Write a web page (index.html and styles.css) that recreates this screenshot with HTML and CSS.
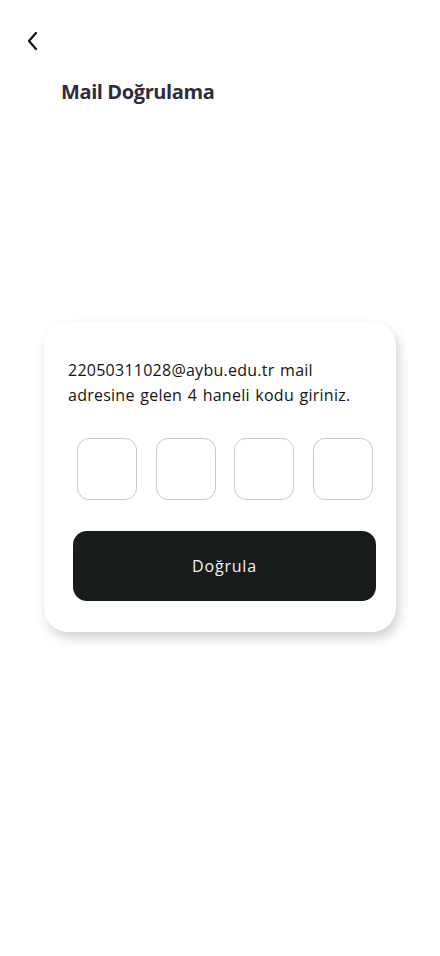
FILE: index.html
```html
<!DOCTYPE html>
<html lang="tr">
<head>
<meta charset="utf-8">
<title>Mail Doğrulama</title>
<link rel="stylesheet" href="styles.css">
</head>
<body>
<div class="screen">
  <header class="header">
    <button class="back" aria-label="Geri">
      <svg width="14" height="20" viewBox="0 0 14 20"><path d="M10 2 L3 10 L10 18" fill="none" stroke="#111" stroke-width="2.2" stroke-linecap="round" stroke-linejoin="round"/></svg>
    </button>
    <h1 class="title">Mail Doğrulama</h1>
  </header>
  <main class="main">
    <section class="card">
      <p class="info">22050311028@aybu.edu.tr mail adresine gelen 4 haneli kodu giriniz.</p>
      <div class="codes">
        <div class="code"></div>
        <div class="code"></div>
        <div class="code"></div>
        <div class="code"></div>
      </div>
      <button class="verify">Doğrula</button>
    </section>
  </main>
</div>
</body>
</html>
```
FILE: styles.css
```css
* { box-sizing: border-box; }
html, body { margin: 0; padding: 0; background: #fff; }
body {
  font-family: "Open Sans", "DejaVu Sans", sans-serif;
  color: #111;
  width: 440px;
  height: 956px;
  overflow: hidden;
}
.screen { display: flex; flex-direction: column; }
.header { display: flex; flex-direction: column; padding: 31px 0 0 26px; }
.back {
  width: 14px; height: 20px; padding: 0; border: 0; background: none;
  display: flex; cursor: pointer;
}
.title {
  margin: 28px 0 0 35px;
  font-size: 20px;
  font-weight: 700;
  letter-spacing: -0.4px;
  color: #2e2c3b;
  line-height: 26px;
}
.main { display: flex; padding: 217px 0 0 44px; }
.card {
  width: 352px;
  background: #fff;
  border-radius: 24px;
  padding: 36px 20px 31px 24px;
  box-shadow: 3px 6px 12px rgba(0, 0, 0, 0.18);
  display: flex;
  flex-direction: column;
}
.info {
  margin: 0;
  font-size: 16px;
  line-height: 25px;
  color: #141414;
  letter-spacing: 0.25px;
  word-spacing: 1.2px;
}
.codes {
  display: flex;
  justify-content: space-between;
  margin: 30px 3px 0 9px;
}
.code {
  width: 60px;
  height: 62px;
  border: 1.5px solid #c9c9cd;
  border-radius: 12px;
}
.verify {
  margin: 31px 0 0 5px;
  height: 70px;
  border: 0;
  border-radius: 14px;
  background: #181b1c;
  color: #f2f2f2;
  font-family: inherit;
  font-size: 16px;
  font-weight: 500;
  letter-spacing: 0.8px;
}
```
